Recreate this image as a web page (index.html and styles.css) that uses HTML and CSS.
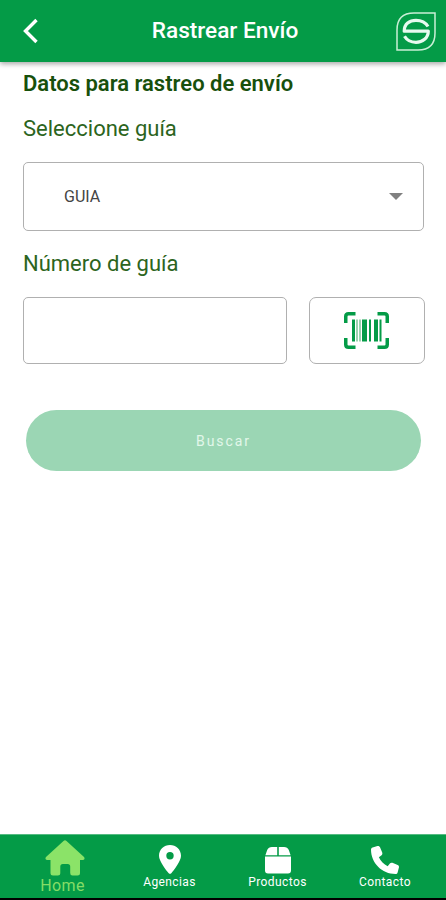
FILE: index.html
```html
<!DOCTYPE html>
<html lang="es">
<head>
  <meta charset="UTF-8">
  <meta name="viewport" content="width=device-width,initial-scale=1">
  <title>Rastrear Envío</title>
  <link rel="stylesheet" href="styles.css">
</head>
<body>
  <header class="topbar">
    <a class="back" href="#" aria-label="Volver">
      <svg width="16" height="26" viewBox="0 0 16 26"><path d="M13.5 2 L2.5 13 L13.5 24"/></svg>
    </a>
    <h1>Rastrear Envío</h1>
    <svg class="logo" width="40" height="39" viewBox="0 0 40 39">
      <path class="leaf" d="M39 1 H18 Q1 1 1 18 V38 H22 Q39 38 39 21 Z"/>
      <path class="ess" d="M32 14.5 C29 9.5 25 8.3 20 8.3 C13.5 8.3 8.2 12 8.2 19.200 H32.3 C32.3 26 26.5 30.3 20 30.3 C15 30.3 11 28.5 8.5 24.3"/>
    </svg>
  </header>

  <main>
    <h2>Datos para rastreo de envío</h2>
    <label class="label-guia">Seleccione guía</label>
    <div class="select">
      <span>GUIA</span>
      <svg width="14" height="7" viewBox="0 0 14 7"><path d="M0 0 H14 L7 7 Z" fill="#808080"/></svg>
    </div>
    <label class="label-numero" for="numero">Número de guía</label>
    <div class="row">
      <input type="text" id="numero">
      <button class="scan" aria-label="Escanear">
        <svg width="45" height="37" viewBox="0 0 45 37">
          <path class="corners" d="M1.75 11 V4.5 Q1.75 1.75 4.5 1.75 H11.5 M33.5 1.75 H40.5 Q43.25 1.75 43.25 4.5 V11 M43.25 26 V32.5 Q43.25 35.25 40.5 35.25 H33.5 M11.5 35.25 H4.5 Q1.75 35.25 1.75 32.5 V26"/>
          <path fill="#049b47" d="M8 7.5h3v22h-3z M18 7.5h5v22h-5z M25 7.5h2v22h-2z M30 7.5h4v22h-4z M35.5 7.5h2v22h-2z"/>
          <path fill="#9bd3af" d="M12 7.5h2v22h-2z M15 7.5h2v22h-2z"/>
        </svg>
      </button>
    </div>
    <button class="buscar">Buscar</button>
  </main>

  <nav>
    <a class="active" href="#">
      <svg width="40" height="36" viewBox="0 0 40 36">
        <path d="M18.5 1 Q20 -.3 21.5 1 L39 17 Q40.5 19.5 38 20 H35 V33 Q35 35.5 32.5 35.5 H27.5 Q25.2 35.5 25.2 33 V26.5 Q25.2 24 22.7 24 H17.8 Q15.3 24 15.3 26.5 V33 Q15.3 35.5 12.8 35.5 H8 Q5.5 35.5 5.5 33 V20 H2 Q-.5 19.5 1 17 Z"/>
      </svg>
      <span>Home</span>
    </a>
    <a href="#">
      <svg width="22" height="29" viewBox="0 0 22 29">
        <path fill-rule="evenodd" d="M11 0 C17 0 22 4.5 22 10.7 C22 16 15 25 12.3 28.2 Q11 29.5 9.7 28.2 C7 25 0 16 0 10.7 C0 4.5 5 0 11 0 Z M11 7 A3.7 3.7 0 1 0 11 14.4 A3.7 3.7 0 1 0 11 7 Z"/>
      </svg>
      <span>Agencias</span>
    </a>
    <a href="#">
      <svg width="26" height="27" viewBox="0 0 26 27">
        <path d="M12.2 0 V8.2 H.4 L2.2 3 Q3.5 0 7 0 Z M13.8 0 V8.2 H25.6 L23.8 3 Q22.5 0 19 0 Z M0 9.5 H26 V23.5 Q26 26.5 23 26.5 H3 Q0 26.5 0 23.5 Z"/>
      </svg>
      <span>Productos</span>
    </a>
    <a href="#">
      <svg width="28" height="28" viewBox="0 0 512 512">
        <path d="M164.900 24.600c-7.700-18.600-28-28.500-47.400-23.200l-88 24C12.100 30.200 0 46 0 64c0 247.400 200.600 448 448 448c18 0 33.800-12.100 38.600-29.500l24-88c5.300-19.400-4.600-39.700-23.200-47.400l-96-40c-16.300-6.800-35.200-2.100-46.300 11.600L304.700 368C234.300 334.700 177.300 277.700 144 207.300L193.300 167c13.700-11.200 18.400-30 11.600-46.300l-40-96z"/>
      </svg>
      <span>Contacto</span>
    </a>
  </nav>
</body>
</html>
```
FILE: styles.css
```css
* { box-sizing: border-box; margin: 0; padding: 0; }
body {
  font-family: Roboto, "Liberation Sans", sans-serif;
  height: 900px;
  display: flex;
  flex-direction: column;
  background: #fff;
  overflow: hidden;
}
a { color: inherit; text-decoration: none; }
svg { display: block; flex: none; }
h1, h2, label { white-space: nowrap; }

.topbar {
  height: 62px;
  flex: none;
  display: flex;
  align-items: center;
  justify-content: space-between;
  padding: 0 10px 0 23px;
  background: #049b47;
  color: #fff;
  box-shadow: 0 2px 5px rgba(0,0,0,.35);
}
.back { width: 31px; }
.back path { fill: none; stroke: #fff; stroke-width: 3.4; }
.topbar h1 {
  font-size: 22.6px;
  font-weight: 500;
  line-height: 30px;
}
.leaf { fill: none; stroke: #c9efd6; stroke-width: 1.5; }
.ess { fill: none; stroke: #e8faef; stroke-width: 3.2; stroke-linejoin: round; }

main {
  flex: 1;
  display: flex;
  flex-direction: column;
  padding: 8px 21px 0 23px;
  color: #2c6420;
}
h2 {
  font-size: 22px;
  font-weight: 600;
  line-height: 28px;
  color: #17500c;
}
label { font-size: 22px; line-height: 28px; }
.label-guia { margin-top: 17px; }
.select {
  width: 401px;
  height: 69px;
  margin-top: 19px;
  padding: 0 20px 0 40px;
  display: flex;
  align-items: center;
  justify-content: space-between;
  border: 1.5px solid #b0b0b0;
  border-radius: 5px;
  color: #444;
  font-size: 16px;
}
.label-numero { margin-top: 19px; }
.row {
  display: flex;
  gap: 21px;
  margin-top: 19px;
}
.row input {
  width: 265px;
  height: 67px;
  border: 1.5px solid #b0b0b0;
  border-radius: 5px;
}
.scan {
  width: 117px;
  height: 67px;
  margin-left: 1px;
  display: flex;
  align-items: center;
  justify-content: center;
  background: #fff;
  border: 1.5px solid #b0b0b0;
  border-radius: 7px;
}
.corners { fill: none; stroke: #049b47; stroke-width: 3.5; }
.buscar {
  width: 395px;
  height: 61px;
  margin: 46px 0 0 3px;
  border: none;
  border-radius: 31px;
  background: #9bd6b4;
  color: #e2f7ea;
  font: 400 14px Roboto, sans-serif;
  letter-spacing: 1.9px;
}

nav {
  height: 66px;
  flex: none;
  display: grid;
  grid-template-columns: 107px 107px 109px 106px;
  padding-left: 9px;
  background: #049b47;
  border-top: 1px solid #55bb82;
  border-bottom: 2px solid #000;
  color: #fff;
}
nav a {
  display: flex;
  flex-direction: column;
  align-items: center;
  justify-content: flex-end;
  padding-bottom: 8px;
  font-size: 12px;
  line-height: 16px;
  letter-spacing: .4px;
}
nav svg { fill: #fff; }
nav .active {
  color: #84dc66;
  font-size: 16px;
  line-height: 20px;
  padding-bottom: 2px;
}
nav .active svg { fill: #8be368; margin-left: 4px; }
```
